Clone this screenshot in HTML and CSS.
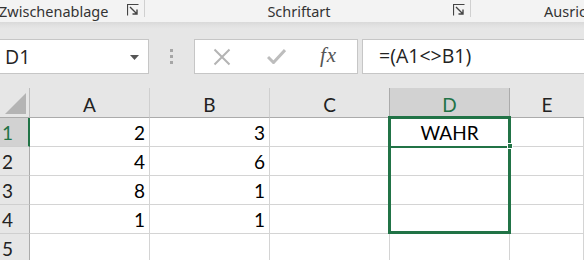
FILE: index.html
```html
<!DOCTYPE html>
<html>
<head>
<meta charset="utf-8">
<link rel="stylesheet" href="styles.css">
</head>
<body>
<div class="app">
  <div class="ribbon">
    <div class="group g-clip"><span class="glabel">Zwischenablage</span>
      <svg class="launcher" width="12" height="12" viewBox="0 0 12 12"><path d="M0.5 11.5V0.5H11.5" fill="none" stroke="#444" stroke-width="1.2"/><path d="M3 3L10 10M10 5.5V10H5.5" fill="none" stroke="#444" stroke-width="1.4"/></svg>
      <span class="sep"></span>
    </div>
    <div class="group g-font"><span class="glabel">Schriftart</span>
      <svg class="launcher" width="12" height="12" viewBox="0 0 12 12"><path d="M0.5 11.5V0.5H11.5" fill="none" stroke="#444" stroke-width="1.2"/><path d="M3 3L10 10M10 5.5V10H5.5" fill="none" stroke="#444" stroke-width="1.4"/></svg>
      <span class="sep"></span>
    </div>
    <div class="group g-align"><span class="glabel">Ausrichtung</span></div>
  </div>
  <div class="fbar">
    <div class="namebox"><span class="nbtext">D1</span>
      <svg class="caret" width="9" height="5" viewBox="0 0 9 5"><path d="M0 0H9L4.5 5Z" fill="#555"/></svg>
    </div>
    <div class="grip"><i></i><i></i><i></i></div>
    <div class="fxbox">
      <svg class="ico" width="18" height="18" viewBox="0 0 18 18"><path d="M1.5 1.5L16.5 16.5M16.5 1.5L1.5 16.5" stroke="#b4b4b4" stroke-width="2" fill="none"/></svg>
      <svg class="ico" width="19" height="16" viewBox="0 0 19 16"><path d="M1 9L6.5 14.5L18 2" stroke="#bdbdbd" stroke-width="3" fill="none"/></svg>
      <span class="fx">fx</span>
    </div>
    <div class="formula">=(A1&lt;&gt;B1)</div>
  </div>
  <div class="sheet">
    <div class="corner"><span class="tri"></span></div>
    <div class="ch">A</div><div class="ch">B</div><div class="ch">C</div><div class="ch sel">D</div><div class="ch last">E</div>

    <div class="rh sel">1</div>
    <div class="c num">2</div><div class="c num">3</div><div class="c"></div><div class="c ctr">WAHR</div><div class="c"></div>

    <div class="rh">2</div>
    <div class="c num">4</div><div class="c num">6</div><div class="c"></div><div class="c"></div><div class="c"></div>

    <div class="rh">3</div>
    <div class="c num">8</div><div class="c num">1</div><div class="c"></div><div class="c"></div><div class="c"></div>

    <div class="rh">4</div>
    <div class="c num">1</div><div class="c num">1</div><div class="c"></div><div class="c"></div><div class="c"></div>

    <div class="rh">5</div>
    <div class="c"></div><div class="c"></div><div class="c"></div><div class="c"></div><div class="c"></div>

    <div class="selbox"></div>
    <div class="activeline"></div>
    <div class="handle"></div>
  </div>
</div>
</body>
</html>
```

FILE: styles.css
```css
* { box-sizing: border-box; }
html, body { margin: 0; padding: 0; }
body { width: 584px; height: 260px; overflow: hidden; background: #e6e6e6; }
.app { width: 584px; height: 260px; overflow: hidden; display: flex; flex-direction: column; }

.ribbon {
  height: 22px; flex: none; background: #f3f3f3;
  display: flex;
  font-family: "Noto Sans", "Open Sans", sans-serif; font-size: 14.5px; color: #333;
}
.group { display: flex; align-items: center; height: 22px; }
.group .glabel { line-height: 22px; white-space: nowrap; }
.sep { align-self: flex-start; width: 1px; height: 17px; background: #d0d0d0; margin-left: 5px; }
.g-clip { width: 146px; margin-left: -1px; }
.g-clip .glabel { width: 128px; }
.g-font { width: 327px; }
.g-font .glabel { width: 308px; text-align: center; }
.g-align { flex: 1; padding-left: 72px; overflow: hidden; }
.launcher { flex: none; margin-top: -2px; }

.fbar {
  height: 66px; flex: none;
  background: linear-gradient(#d9d9d9 0, #e2e2e2 4px, #e6e6e6 7px, #e6e6e6 100%);
  display: flex; align-items: flex-start; padding-top: 17px;
}
.namebox {
  width: 149px; height: 35px; background: #fff; border: 1px solid #c6c6c6; border-left: none;
  display: flex; align-items: center; justify-content: space-between; padding: 0 9px 0 5px;
  font-family: "Open Sans", "Noto Sans", sans-serif; font-size: 19.5px; color: #222;
}
.nbtext { margin-top: -1px; }
.caret { margin-top: 2px; }
.grip { width: 45px; height: 35px; display: flex; flex-direction: column; align-items: center; justify-content: center; gap: 3px; }
.grip i { display: block; width: 3px; height: 3px; background: #a6a6a6; }
.fxbox {
  width: 164px; height: 35px; background: #fff; border: 1px solid #c6c6c6;
  display: flex; align-items: center; padding-left: 18px;
}
.fxbox .ico:nth-child(1) { margin-right: 36px; }
.fxbox .ico:nth-child(2) { margin-right: 34px; margin-top: -2px; }
.fx { font-family: "Liberation Serif", "DejaVu Serif", serif; font-style: italic; font-size: 21px; color: #555; margin-top: -3px; letter-spacing: 1px; }
.formula {
  flex: 1; height: 35px; margin-left: 4px; background: #fff; border: 1px solid #c6c6c6; border-right: none;
  font-family: "Open Sans", "Noto Sans", sans-serif; font-size: 19.5px; color: #222;
  padding-left: 16px; line-height: 32px;
}

.sheet {
  position: relative; flex: 1;
  display: grid; grid-template-columns: 30px 120px 120px 120px 120px 1fr;
  grid-template-rows: 30px 29px 29px 29px 29px 29px;
  font-family: "Lato", "Open Sans", sans-serif; font-size: 19px; color: #000;
}
.corner { background: #e6e6e6; border-right: 1px solid #bdbdbd; border-bottom: 1px solid #ababab; position: relative; }
.tri { position: absolute; left: 5px; top: 5px; width: 0; height: 0; border-style: solid; border-width: 0 0 21px 21px; border-color: transparent transparent #b4b4b4 transparent; }
.ch {
  background: #e6e6e6; border-right: 1px solid #cfcfcf; border-bottom: 1px solid #ababab;
  display: flex; align-items: center; justify-content: center; padding-top: 3px; color: #222;
}
.ch.sel { background: #d2d2d2; color: #217346; border-right-color: #ababab; border-left: 1px solid #ababab; margin-left: -1px; }
.ch.last { border-right: none; }
.rh {
  background: #e6e6e6; border-right: 1px solid #ababab; border-bottom: 1px solid #cfcfcf;
  display: flex; align-items: center; padding-left: 2px; color: #222;
}
.rh.sel { background: #d2d2d2; color: #217346; border-right: 2px solid #217346; }
.c { background: #fff; border-right: 1px solid #d4d4d4; border-bottom: 1px solid #d4d4d4; display: flex; align-items: center; padding: 1px 4px 0; }
.c.num { justify-content: flex-end; }
.c.ctr { justify-content: center; }

.selbox { position: absolute; left: 388px; top: 28px; width: 123px; height: 118px; border: 3px solid #217346; pointer-events: none; }
.activeline { position: absolute; left: 390px; top: 58px; width: 118px; height: 2px; background: #217346; }
.handle { position: absolute; left: 507px; top: 55px; width: 6px; height: 6px; background: #217346; border: 1px solid #fff; }
```
